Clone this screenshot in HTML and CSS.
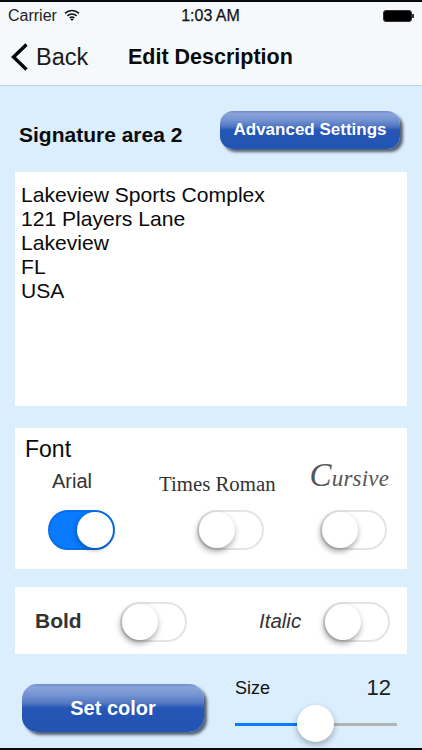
FILE: index.html
```html
<!DOCTYPE html>
<html lang="en">
<head>
<meta charset="utf-8">
<title>Edit Description</title>
<link rel="stylesheet" href="styles.css">
</head>
<body>
<div class="screen">
  <header class="top">
    <div class="status">
      <div class="status-left">
        <span>Carrier</span>
        <svg class="wifi" width="16" height="12" viewBox="0 0 16 12"><path d="M1 4.4a10 10 0 0 1 14 0M3.4 6.9a6.6 6.6 0 0 1 9.2 0M5.7 9.1a3.3 3.3 0 0 1 4.6 0" fill="none" stroke="#111" stroke-width="1.5"/><path d="M8 12l-1.6-1.7a2.2 2.2 0 0 1 3.2 0z" fill="#111"/></svg>
      </div>
      <div class="clock">1:03 AM</div>
      <div class="battery"><span class="battery-body"></span><span class="battery-tip"></span></div>
    </div>
    <nav class="nav">
      <div class="back">
        <svg width="20" height="28" viewBox="0 0 20 28"><path d="M17.5 1.5L4.5 14l13 12.5" fill="none" stroke="#000" stroke-width="3.4"/></svg>
        <span>Back</span>
      </div>
      <h1 class="title">Edit Description</h1>
    </nav>
  </header>
  <main class="content">
    <div class="heading-row">
      <h2 class="area">Signature area 2</h2>
      <button class="gel gel-small">Advanced Settings</button>
    </div>
    <div class="textbox">Lakeview Sports Complex<br>121 Players Lane<br>Lakeview<br>FL<br>USA</div>
    <section class="panel font-panel">
      <div class="font-title">Font</div>
      <div class="font-names">
        <span class="name-arial">Arial</span>
        <span class="name-times">Times Roman</span>
        <span class="name-cursive">Cursive</span>
      </div>
      <div class="font-switches">
        <span class="switch on"><i></i></span>
        <span class="switch"><i></i></span>
        <span class="switch"><i></i></span>
      </div>
    </section>
    <section class="panel style-panel">
      <span class="bold">Bold</span>
      <span class="switch"><i></i></span>
      <span class="italic">Italic</span>
      <span class="switch"><i></i></span>
    </section>
    <div class="bottom-row">
      <button class="gel gel-large">Set color</button>
      <div class="size">
        <div class="size-labels"><span>Size</span><span class="size-value">12</span></div>
        <div class="slider"><span class="fill"></span><span class="rest"></span><span class="thumb"></span></div>
      </div>
    </div>
  </main>
</div>
</body>
</html>
```
FILE: styles.css
```css
* { box-sizing: border-box; }
html, body { margin: 0; padding: 0; }
body { width: 422px; height: 750px; overflow: hidden; font-family: "Liberation Sans", Arial, sans-serif; color: #000; background: #dbeefd; }
.screen { width: 422px; height: 750px; display: flex; flex-direction: column; border-top: 2px solid #0a0a0a; border-bottom: 2px solid #0a0a0a; }
.top { height: 84px; background: #f6f9fb; border-bottom: 1px solid #c4cfd9; flex: none; }
.status { height: 27px; display: grid; grid-template-columns: 1fr auto 1fr; align-items: center; padding: 1px 8px 0 8px; font-size: 16px; color: #222; }
.status-left { display: flex; align-items: center; gap: 7px; }
.wifi { margin-top: -3px; }
.clock { color: #111; -webkit-text-stroke: 0.25px #111; margin-right: 1px; }
.battery { display: flex; align-items: center; justify-content: flex-end; }
.battery-body { width: 29px; height: 12px; background: #000; border: 1px solid #333; border-radius: 3px; }
.battery-tip { width: 2px; height: 4px; background: #333; }
.nav { height: 56px; display: flex; align-items: center; padding: 0 0 0 9px; }
.back { display: flex; align-items: center; gap: 7px; width: 119px; font-size: 23.5px; color: #1a1a1a; }
.title { margin: 0; font-size: 21.5px; font-weight: 700; color: #0a0a0a; }
.content { flex: 1; display: flex; flex-direction: column; padding: 0 15px; min-height: 0; }
.heading-row { height: 86px; display: flex; align-items: center; padding: 0 7px 0 4px; justify-content: space-between; }
.area { margin: 11px 0 0; font-size: 21px; font-weight: 700; color: #0a0a0a; }
.gel { border: none; color: #fff; font-family: inherit; font-weight: 700; padding: 0; background: linear-gradient(to bottom, #6f8ccd 0, #8aa3da 7%, #7392d2 24%, #5377c3 40%, #2556b6 50%, #2254b4 100%); box-shadow: 3px 3px 3px rgba(40, 50, 70, .75); }
.gel-small { width: 180px; height: 38px; border-radius: 13px; font-size: 17px; margin-top: 2px; }
.gel-large { width: 182px; height: 48px; border-radius: 15px; font-size: 20px; margin-left: 7px; }
.textbox { height: 234px; flex: none; background: #fff; padding: 11px 6px; font-size: 21.1px; line-height: 24px; color: #0a0a0a; }
.panel { background: #fff; flex: none; }
.font-panel { height: 141px; margin-top: 22px; padding-top: 9px; }
.font-title { font-size: 23px; line-height: 25px; color: #0a0a0a; margin-left: 10px; }
.font-names { display: flex; align-items: flex-end; height: 28px; margin-top: 6px; color: #333; white-space: nowrap; }
.name-arial { font-size: 20px; margin-left: 37px; padding-bottom: 3px; }
.name-times { font-family: "Liberation Serif", "Times New Roman", serif; font-size: 20.8px; margin-left: 67px; }
.name-cursive { font-family: "Liberation Serif", serif; font-style: italic; font-size: 23px; color: #555; margin-left: 34px; padding-bottom: 2px; letter-spacing: .2px; }
.name-cursive::first-letter { font-size: 33px; }
.font-switches { display: flex; margin: 14px 0 0 33px; }
.font-switches .switch:nth-child(2) { margin-left: 82px; }
.font-switches .switch:nth-child(3) { margin-left: 56px; }
.switch { display: block; position: relative; width: 67px; height: 40px; border-radius: 20px; border: 2px solid #e4e4e4; background: #fff; flex: none; }
.switch i { position: absolute; left: 0; top: 0; width: 36px; height: 36px; border-radius: 50%; background: #fff; box-shadow: -1px 3px 6px rgba(0, 0, 0, .4); }
.switch.on { background: #0a7aff; border-color: #0a6fe6; }
.switch.on i { left: 27px; box-shadow: -1px 2px 5px rgba(0, 0, 0, .3); }
.style-panel { height: 67px; margin-top: 18px; display: flex; align-items: center; padding: 3px 0 0 20px; }
.bold { font-size: 21px; font-weight: 700; color: #333; width: 85px; margin-top: -3px; }
.italic { font-size: 20.5px; font-style: italic; color: #333; margin-left: 72px; width: 64px; margin-top: -3px; }
.bottom-row { display: flex; margin-top: 30px; }
.size { margin-left: 31px; width: 162px; margin-top: -8px; }
.size-labels { display: flex; justify-content: space-between; align-items: center; font-size: 18px; color: #111; height: 24px; padding-right: 6px; }
.size-value { font-size: 22px; color: #222; }
.slider { position: relative; display: flex; align-items: center; height: 38px; margin-top: 5px; }
.fill { width: 81px; height: 3px; background: #0a7aff; }
.rest { flex: 1; height: 3px; background: #b3b3b3; }
.thumb { position: absolute; left: 62px; top: 0; width: 37px; height: 37px; border-radius: 50%; background: #fff; box-shadow: 0 3px 6px rgba(0, 0, 0, .3); }
```
